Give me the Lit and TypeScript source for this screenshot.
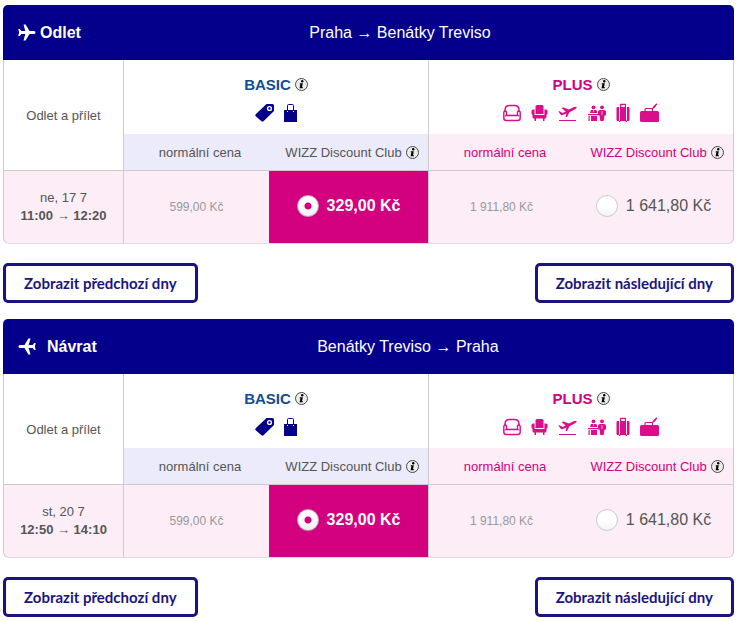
import { LitElement, html, svg, css } from "lit";
import { customElement, property } from "lit/decorators.js";

interface Flight {
  id: string;
  title: string;
  back: boolean;
  from: string;
  to: string;
  date: string;
  departs: string;
  arrives: string;
  basic: [string, string];
  plus: [string, string];
}

const flights: Flight[] = [
  { id: "out", title: "Odlet", back: false, from: "Praha", to: "Benátky Treviso", date: "ne, 17 7",
    departs: "11:00", arrives: "12:20", basic: ["599,00 Kč", "329,00 Kč"], plus: ["1 911,80 Kč", "1 641,80 Kč"] },
  { id: "back", title: "Návrat", back: true, from: "Benátky Treviso", to: "Praha", date: "st, 20 7",
    departs: "12:50", arrives: "14:10", basic: ["599,00 Kč", "329,00 Kč"], plus: ["1 911,80 Kč", "1 641,80 Kč"] },
];

const planeShape = svg`<path d="M17.500 8.500c0-1-1-1.500-2-1.500h-4L7.600.5H5.500L7.300 7H3.300L1.800 5H.3l.8 3.500L.3 12h1.500l1.500-2h4L5.500 16.500h2.100L11.500 10h4c1 0 2-.5 2-1.500z" fill="#fff"/>`;

const planeRight = html`<svg class="plane" width="18" height="17" viewBox="0 0 18 17" aria-hidden="true">${planeShape}</svg>`;
const planeLeft = html`<svg class="plane" width="25" height="17" viewBox="0 0 25 17" aria-hidden="true"><g transform="matrix(-1 0 0 1 18 0)">${planeShape}</g></svg>`;

const info = (label: string) => html`<button class="info" type="button" aria-label=${label}>
  <svg width="13" height="13" viewBox="0 0 13 13" aria-hidden="true">
    <circle cx="6.500" cy="6.500" r="6" fill="#ececec" stroke="#4a4a4a"/>
    <circle cx="7.200" cy="3.300" r="1.200" fill="#000"/>
    <path d="M4.800 5.300h3L7 9.300h1l-.2 1H4.600l.8-4h-.8z" fill="#000"/>
  </svg></button>`;

const icon = (w: number, label: string, body: unknown) =>
  html`<svg width=${w} height="20" viewBox="0 0 ${w} 20" role="img" aria-label=${label}>${body}</svg>`;

const basicIcons = [
  icon(19, "Cenovka", svg`<path d="M11.500 1h6Q19 1 19 2.500V8L8.500 18.300q-1 .9-2 0L.7 13.200q-.9-1 0-2z" fill="#04008c"/><circle cx="14.500" cy="5.500" r="1.900" fill="none" stroke="#fff" stroke-width="1.400"/>`),
  icon(13, "Příruční zavazadlo", svg`<path d="M3.500 8V2.500q0-1 1-1h4q1 0 1 1V8" fill="none" stroke="#04008c"/><path d="M0 7h13v12H0z" fill="#04008c"/><path d="M3 8h1v1H3zM9 8h1v1H9z" fill="#fff"/>`),
];

const plusIcons = [
  icon(18, "Sedadlo", svg`<g fill="none" stroke="#da0d8a"><path d="M2 9V7Q2 2.600 6.500 2.600h5Q16 2.600 16 7v2" stroke-width="1.500"/><path d="M3.500 12.500V9.500Q3.500 8 2.200 8T.8 9.500V15q0 2.500 2.500 2.500h11.400q2.500 0 2.500-2.500V9.500Q17.200 8 15.800 8T14.500 9.500v3z" stroke-width="1.400"/><path d="M1.500 13.200q1.500-1 3-.8h9q1.500-.2 3 .8" stroke-width="1"/></g>`),
  icon(17, "Křeslo", svg`<g fill="#da0d8a"><path d="M6 2h5q1.500 0 1.500 1.500V11h-8V3.500Q4.500 2 6 2z"/><path d="M.5 8Q.5 6.500 2 6.500h1.600V12h9.800V6.500H15q1.500 0 1.500 1.500v2.500q0 1-1 1.200V14q0 1.500-1.500 1.500H3Q1.500 15.500 1.500 14v-2.300q-1-.2-1-1.200zM3.500 15H5v3H3.500zM12 15h1.500v3H12z"/></g>`),
  icon(19, "Odbavení na letišti", svg`<path d="M.3 8.500l1.300-.2 3 1.700 3-1.400L3.500 5l1.800-.5L11 6.500l4.500-2.300q2.300-1 3-.2.700 1-1.500 2.200l-5.500 3L9 14H7.500l1-3.500L4.700 12Q3.500 12.500 3 12z" fill="#da0d8a"/><path d="M1 17.500h17" stroke="#da0d8a"/>`),
  icon(19, "Přednostní nástup", svg`<g fill="#da0d8a"><circle cx="6.500" cy="4.300" r="1.900"/><path d="M4 7h5q1 0 1.200 3H3zM1 11h10v1.300H1zM1.500 13h1.200v5H1.500zM4 13h6v5H4z"/><circle cx="15" cy="4.300" r="1.900"/><path d="M13 7h4q2 0 2 2v3.500h-1.500l-.8 5.500h-3.400l-.8-5.500H11V9q0-2 2-2z"/></g><path d="M15 8v4M6.500 7v2" stroke="#fff" stroke-width=".6"/>`),
  icon(14, "Odbavené zavazadlo", svg`<g fill="#da0d8a"><path fill-rule="evenodd" d="M4 4V1.500Q4 .8 4.700.8h4.600q.7 0 .7.700V4zM5.200 4h3.600V2H5.200z"/><path d="M1.500 4H3v14H1.500Q.5 18 .5 17V5q0-1 1-1zM4 4h6v14H4zM11 4h1.500q1 0 1 1v12q0 1-1 1H11zM3 17.500h1.500V19H3zM9.500 17.500H11V19H9.500z"/></g>`),
  icon(19, "Příruční taška", svg`<path d="M1.500 8h16q1.500 0 1.500 1.500v8q0 1.500-1.500 1.500h-16Q0 19 0 17.500v-8Q0 8 1.500 8z" fill="#da0d8a"/><path d="M5 8V6.500Q5 5.500 6 5.500h6.500V8M12 6l2-2" fill="none" stroke="#da0d8a" stroke-width="1.200"/><path d="M13 3.500L16.500.3l.8.900L14.500 5z" fill="#da0d8a"/>`),
];

@customElement("flight-fares")
export class FlightFares extends LitElement {
  @property({ attribute: false }) flight!: Flight;

  static styles = css`
    :host { display: block; }
    * { box-sizing: border-box; }
    .bar {
      display: flex; align-items: center; gap: 4px; height: 55px; padding: 0 19px 0 15px;
      background: #04008c; color: #fff; border-radius: 5px 5px 0 0; font-size: 16px;
    }
    .title { display: flex; align-items: center; gap: 4px; margin: 0; font-size: 16px; font-weight: 700; }
    .plane { display: block; }
    .route { flex: 1; margin: 0; text-align: center; }
    table { width: 100%; table-layout: fixed; border-collapse: separate; border-spacing: 0; }
    .c-time { width: 121px; }
    .c-full { width: 145px; }
    .c-gap { width: 7px; }
    .c-club { width: 153px; }
    th, td { padding: 0; font-size: 13px; font-weight: 400; text-align: center; vertical-align: middle; color: #555; border: 0 solid #ccc; }
    .edge { border-left-width: 1px; }
    .end { border-right-width: 1px; }
    .under { border-bottom-width: 1px; }
    .fare { height: 74px; padding-top: 3px; }
    .name { display: flex; align-items: center; justify-content: center; gap: 4px; height: 20px; margin-bottom: 9px; font-size: 15px; font-weight: 700; color: #0f4c96; }
    .plus .name { color: #d3007f; }
    .icons { display: flex; justify-content: center; gap: 10px; }
    .sub { height: 37px; background: #ebebfb; }
    .sub.pink { background: #fcedf6; color: #d3007f; }
    .club { display: inline-flex; align-items: center; gap: 4px; }
    .info { display: block; width: 13px; height: 13px; padding: 0; border: 0; background: none; cursor: pointer; }
    .info svg { display: block; }
    tbody th, tbody td { height: 73px; background: #fcedf6; }
    .when { line-height: 18px; }
    .when p { margin: 0; }
    .hours { font-weight: 700; }
    .full { font-size: 12px; color: #999; }
    .pick { display: inline-flex; align-items: center; gap: 8px; font-size: 16px; cursor: pointer; }
    tbody .chosen { background: #d3007f; color: #fff; font-weight: 700; }
    .low { border-bottom: 1px solid #ddd; }
    tbody .first { border-bottom-left-radius: 6px; }
    tbody .last { border-bottom-right-radius: 6px; }
    .radio {
      appearance: none; flex: none; width: 22px; height: 22px; margin: 0; border: 1px solid #ccc; border-radius: 50%;
      background: linear-gradient(#fff 50%, #f3f3f3);
    }
    .radio:checked { border-color: #c5a8b8; background: radial-gradient(circle, #d3007f 3px, transparent 4px), linear-gradient(#fff 40%, #eee); }
  `;

  render() {
    const f = this.flight;
    const group = `fare-${f.id}`;
    return html`
      <header class="bar">
        <h2 class="title">${f.back ? planeLeft : planeRight}${f.title}</h2>
        <p class="route">${f.from} → ${f.to}</p>
      </header>
      <table>
        <colgroup>
          <col class="c-time"><col class="c-full"><col class="c-gap"><col class="c-club"><col class="c-full"><col class="c-gap"><col class="c-club">
        </colgroup>
        <thead>
          <tr>
            <th class="edge end under" rowspan="2" scope="col">Odlet a přílet</th>
            <th class="fare end" colspan="3" scope="colgroup">
              <div class="name">BASIC ${info("Informace o tarifu BASIC")}</div>
              <div class="icons">${basicIcons}</div>
            </th>
            <th class="fare plus end" colspan="3" scope="colgroup">
              <div class="name">PLUS ${info("Informace o tarifu PLUS")}</div>
              <div class="icons">${plusIcons}</div>
            </th>
          </tr>
          <tr>
            <th class="sub under" colspan="2" scope="col">normální cena</th>
            <th class="sub under end" scope="col"><span class="club">WIZZ Discount Club ${info("Informace o klubu")}</span></th>
            <th class="sub pink under" colspan="2" scope="col">normální cena</th>
            <th class="sub pink under end" scope="col"><span class="club">WIZZ Discount Club ${info("Informace o klubu")}</span></th>
          </tr>
        </thead>
        <tbody>
          <tr>
            <th class="when edge end low first" scope="row">
              <p>${f.date}</p>
              <p class="hours">${f.departs} → ${f.arrives}</p>
            </th>
            <td class="full low">${f.basic[0]}</td>
            <td class="chosen end low" colspan="2">
              <label class="pick"><input class="radio" type="radio" name=${group} checked>${f.basic[1]}</label>
            </td>
            <td class="full low">${f.plus[0]}</td>
            <td class="end low last" colspan="2">
              <label class="pick"><input class="radio" type="radio" name=${group}>${f.plus[1]}</label>
            </td>
          </tr>
        </tbody>
      </table>`;
  }
}

@customElement("app-root")
export class AppRoot extends LitElement {
  static styles = css`
    :host { display: block; padding: 5px 4px 4px 3px; font-family: "Liberation Sans", Arial, sans-serif; background: #fff; }
    .days { display: flex; justify-content: space-between; margin: 19px 0 16px; }
    .leg:last-child .days { margin-bottom: 0; }
    .day {
      height: 40px; padding: 0 18px; border: 3px solid #1b1480; border-radius: 5px; background: #fff;
      color: #1b1480; font: 700 15px/20px Lato, sans-serif; cursor: pointer;
    }
  `;

  render() {
    return html`<main>${flights.map((f) => html`
      <section class="leg">
        <flight-fares .flight=${f}></flight-fares>
        <nav class="days" aria-label=${f.title}>
          <button class="day" type="button">Zobrazit předchozí dny</button>
          <button class="day" type="button">Zobrazit následující dny</button>
        </nav>
      </section>`)}</main>`;
  }
}
